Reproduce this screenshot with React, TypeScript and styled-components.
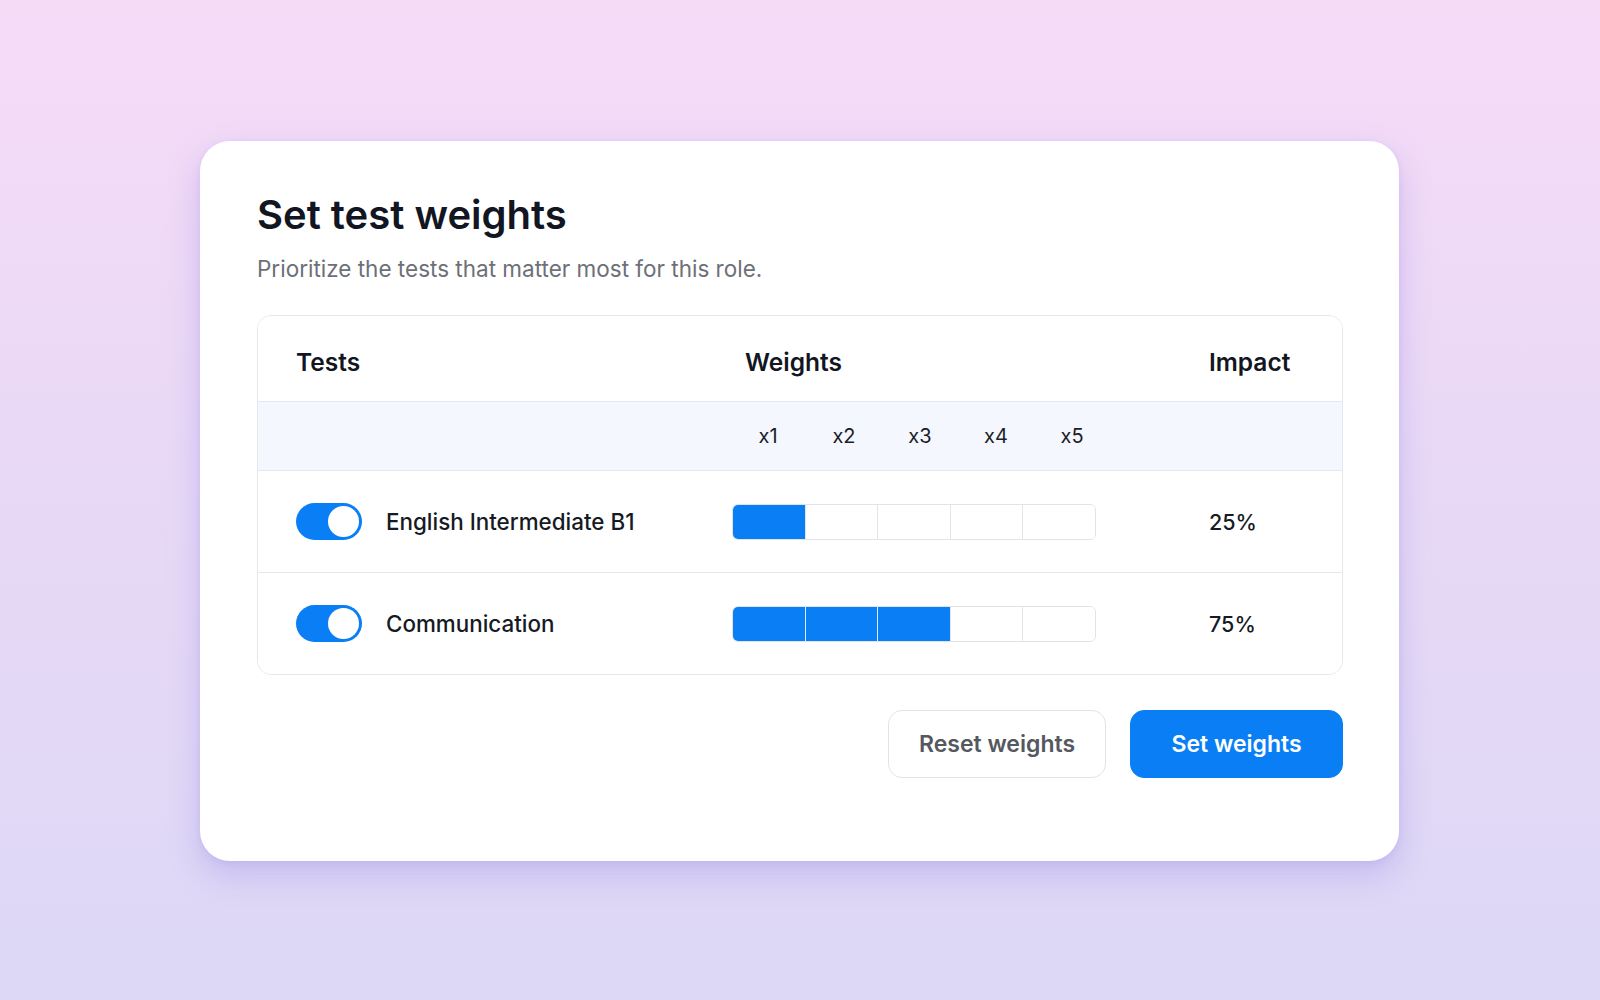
import React, { useState } from 'react';
import styled, { createGlobalStyle } from 'styled-components';

const BLUE = '#0a7ff5';

const GlobalStyle = createGlobalStyle`
  html, body {
    margin: 0;
    padding: 0;
  }
  body {
    font-family: Inter, 'Noto Sans', 'Liberation Sans', sans-serif;
    color: #141824;
    -webkit-font-smoothing: antialiased;
  }
`;

const Page = styled.div`
  width: 1600px;
  height: 1000px;
  box-sizing: border-box;
  padding: 141px 0 0 200px;
  background: linear-gradient(180deg, #f6dbf7 0%, #e9d9f6 45%, #dcd8f6 100%);
`;

const Card = styled.div`
  width: 1199px;
  box-sizing: border-box;
  padding: 50px 56px 83px 57px;
  background: #fff;
  border-radius: 30px;
  box-shadow: 0 14px 32px rgba(128, 110, 225, 0.28), 0 2px 6px rgba(128, 110, 225, 0.12);
`;

const Title = styled.h1`
  margin: 0;
  font-size: 40px;
  line-height: 48px;
  font-weight: 600;
  color: #121622;
`;

const Subtitle = styled.p`
  margin: 16px 0 0;
  font-size: 22.5px;
  line-height: 28px;
  color: #6d7078;
`;

const Table = styled.div`
  margin-top: 32px;
  border: 1px solid #e6e7ec;
  border-radius: 14px;
  overflow: hidden;
`;

const Row = styled.div<{ $height: number; $tint?: boolean; $divider?: boolean }>`
  display: grid;
  grid-template-columns: 436px 477px 1fr;
  align-items: center;
  box-sizing: border-box;
  height: ${(p) => p.$height}px;
  padding: 0 50px 0 38px;
  background: ${(p) => (p.$tint ? '#f4f7fd' : '#fff')};
  border-top: ${(p) => (p.$divider ? '1px solid #e8e9ee' : 'none')};
`;

const HeadCell = styled.div<{ $indent?: number }>`
  font-size: 24.5px;
  font-weight: 600;
  color: #121622;
  padding-top: 6px;
  padding-left: ${(p) => p.$indent || 0}px;
`;

const Scale = styled.div`
  display: flex;
  margin-left: -2px;
`;

const ScaleLabel = styled.span`
  width: 76px;
  text-align: center;
  font-size: 20px;
  color: #1b1e27;
`;

const TestCell = styled.div`
  display: flex;
  align-items: center;
  gap: 24px;
`;

const Track = styled.button<{ $on: boolean }>`
  position: relative;
  width: 66px;
  height: 37px;
  padding: 0;
  border: none;
  border-radius: 19px;
  background: ${(p) => (p.$on ? BLUE : '#d4d6dc')};
  cursor: pointer;
  flex-shrink: 0;

  &::after {
    content: '';
    position: absolute;
    top: 3px;
    left: ${(p) => (p.$on ? '32px' : '3px')};
    width: 31px;
    height: 31px;
    border-radius: 50%;
    background: #fff;
  }
`;

const TestName = styled.span`
  font-size: 22.4px;
  font-weight: 500;
  color: #161a24;
`;

const Bar = styled.div`
  display: flex;
  width: 364px;
  height: 36px;
  box-sizing: border-box;
  border: 1px solid #e2e3e8;
  border-radius: 6px;
  overflow: hidden;
`;

const Segment = styled.div<{ $filled: boolean }>`
  flex: 1;
  background: ${(p) => (p.$filled ? BLUE : '#fff')};
  border-left: 1px solid ${(p) => (p.$filled ? 'rgba(255,255,255,0.85)' : '#e4e5ea')};
  cursor: pointer;

  &:first-child {
    border-left: none;
  }
`;

const Impact = styled.div`
  font-size: 21.5px;
  font-weight: 500;
  color: #161a24;
`;

const Actions = styled.div`
  display: flex;
  justify-content: flex-end;
  gap: 24px;
  margin-top: 35px;
`;

const Button = styled.button<{ $primary?: boolean; $width: number }>`
  width: ${(p) => p.$width}px;
  height: 68px;
  padding: 0;
  border-radius: 14px;
  font-family: inherit;
  font-size: 23px;
  font-weight: 600;
  cursor: pointer;
  border: 1px solid ${(p) => (p.$primary ? BLUE : '#e3e4e8')};
  background: ${(p) => (p.$primary ? BLUE : '#fff')};
  color: ${(p) => (p.$primary ? '#fff' : '#55585f')};
`;

interface TestRow {
  name: string;
  enabled: boolean;
  weight: number;
}

const initialTests: TestRow[] = [
  { name: 'English Intermediate B1', enabled: true, weight: 1 },
  { name: 'Communication', enabled: true, weight: 3 },
];

export default function App() {
  const [tests, setTests] = useState<TestRow[]>(initialTests);

  const total = tests.filter((t) => t.enabled).reduce((s, t) => s + t.weight, 0);

  const update = (i: number, patch: Partial<TestRow>) =>
    setTests((prev) => prev.map((t, j) => (j === i ? { ...t, ...patch } : t)));

  return (
    <>
      <GlobalStyle />
      <Page>
        <Card>
          <Title>Set test weights</Title>
          <Subtitle>Prioritize the tests that matter most for this role.</Subtitle>

          <Table>
            <Row $height={85}>
              <HeadCell>Tests</HeadCell>
              <HeadCell $indent={13}>Weights</HeadCell>
              <HeadCell>Impact</HeadCell>
            </Row>
            <Row $height={69} $tint $divider>
              <div />
              <Scale>
                {[1, 2, 3, 4, 5].map((n) => (
                  <ScaleLabel key={n}>x{n}</ScaleLabel>
                ))}
              </Scale>
              <div />
            </Row>
            {tests.map((t, i) => (
              <Row key={t.name} $height={102} $divider>
                <TestCell>
                  <Track $on={t.enabled} onClick={() => update(i, { enabled: !t.enabled })} />
                  <TestName>{t.name}</TestName>
                </TestCell>
                <Bar>
                  {[1, 2, 3, 4, 5].map((n) => (
                    <Segment key={n} $filled={n <= t.weight} onClick={() => update(i, { weight: n })} />
                  ))}
                </Bar>
                <Impact>
                  {t.enabled && total ? Math.round((t.weight / total) * 100) : 0}%
                </Impact>
              </Row>
            ))}
          </Table>

          <Actions>
            <Button $width={218} onClick={() => setTests(initialTests)}>
              Reset weights
            </Button>
            <Button $width={213} $primary>
              Set weights
            </Button>
          </Actions>
        </Card>
      </Page>
    </>
  );
}
